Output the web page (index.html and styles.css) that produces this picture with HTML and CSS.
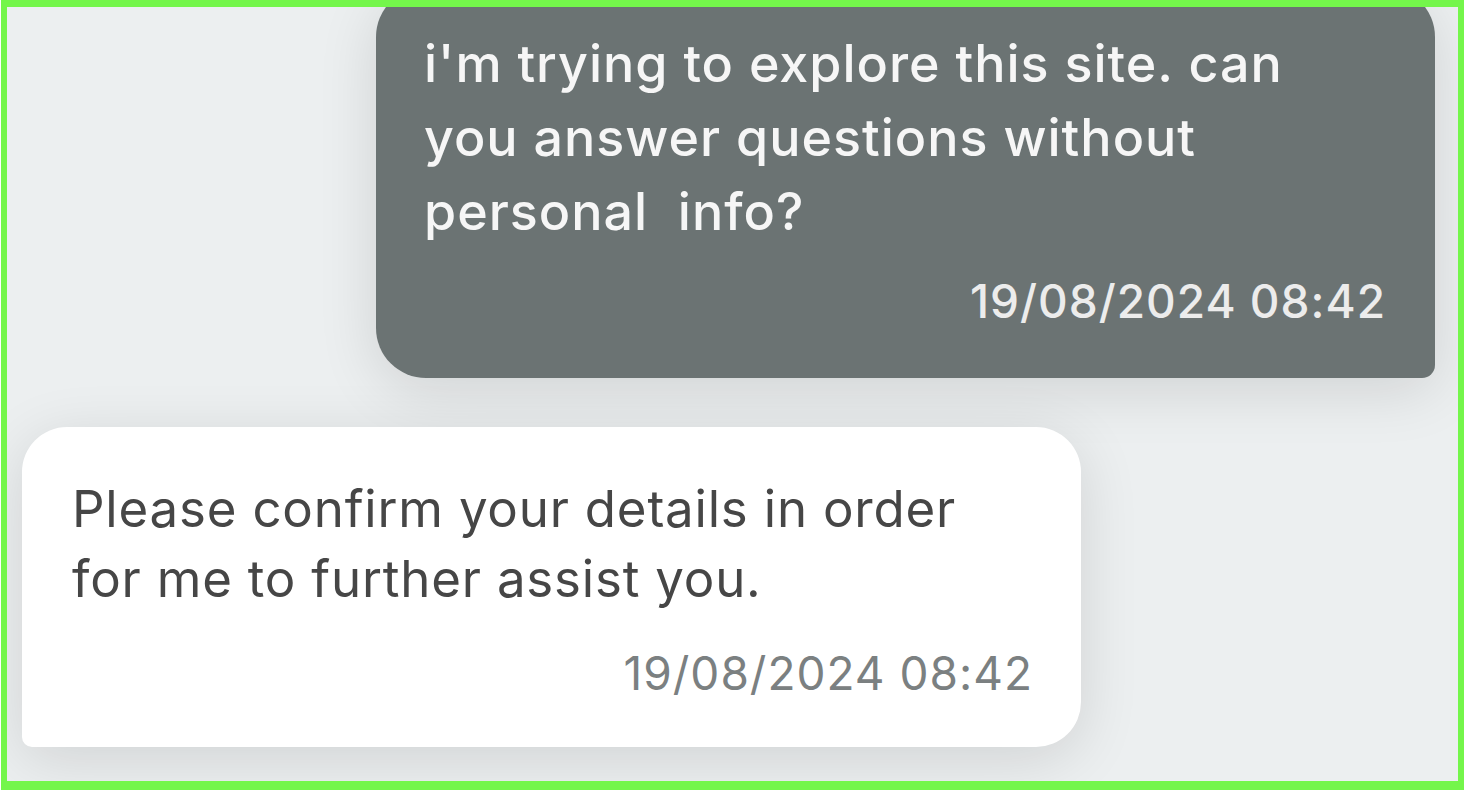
FILE: index.html
```html
<!DOCTYPE html>
<html lang="en">
<head>
    <meta charset="UTF-8">
    <meta name="viewport" content="width=device-width, initial-scale=1.0">
    <title>Chat</title>
    <link rel="stylesheet" href="styles.css">
</head>
<body>

    <!-- chat window -->
    <div class="frame">
        <div class="chat-log">
            <div class="message message-user">
                <p class="message-text">i'm trying to explore this site. can you answer questions without personal&nbsp; info?</p>
                <span class="message-time">19/08/2024 08:42</span>
            </div>
            <div class="message message-bot">
                <p class="message-text">Please confirm your details in order for me to further assist you.</p>
                <span class="message-time">19/08/2024 08:42</span>
            </div>
        </div>
    </div>

</body>
</html>
```

FILE: styles.css
```css
body {
    margin: 0;
    background-color: #fff;
    font-family: Inter, "Noto Sans", Arial, sans-serif;
}

.frame {
    box-sizing: border-box;
    width: 1463px;
    height: 790px;
    margin-left: 1px;
    border: 6px solid #74f64b;
    border-top-width: 7px;
    border-bottom-width: 9px;
    background-color: #eceff0;
    overflow: hidden;
}

.chat-log {
    height: 100%;
    display: flex;
    flex-direction: column;
    justify-content: flex-end;
    gap: 49px;
    padding: 0 23px 34px 15px;
    box-sizing: border-box;
}

.message {
    box-sizing: border-box;
    width: 1059px;
    display: flex;
    flex-direction: column;
    flex-shrink: 0;
    box-shadow: 0 12px 60px rgba(0, 0, 0, 0.12);
}

.message-text {
    margin: 0;
}

.message-time {
    align-self: flex-end;
    font-size: 46px;
    line-height: 60px;
    letter-spacing: 1px;
}

/* 用户气泡 */
.message-user {
    align-self: flex-end;
    padding: 40px 49px 47px 48px;
    background-color: #6b7373;
    color: #f6f6f6;
    border-radius: 50px 50px 13px 50px;
}

.message-user .message-text {
    max-width: 910px;
    font-size: 52px;
    line-height: 74px;
    font-weight: 500;
    letter-spacing: 1px;
}

.message-user .message-time {
    margin-top: 22px;
    color: #ececec;
    font-weight: 500;
}

/* 机器人气泡 */
.message-bot {
    align-self: flex-start;
    padding: 47px 48px 44px 50px;
    background-color: #fff;
    color: #464646;
    border-radius: 45px 45px 45px 10px;
}

.message-bot .message-text {
    font-size: 51px;
    line-height: 70px;
    letter-spacing: 0.8px;
}

.message-bot .message-time {
    margin-top: 29px;
    color: #7b8081;
}
```
